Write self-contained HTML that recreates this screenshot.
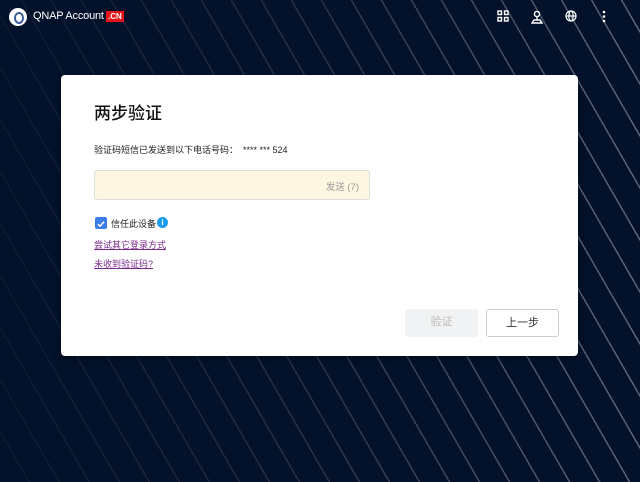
<!DOCTYPE html>
<html><head><meta charset="utf-8"><style>
*{box-sizing:border-box;margin:0;padding:0}
body{width:640px;height:482px;overflow:hidden;background:#03112b;font-family:"Liberation Sans","Noto Sans CJK SC",sans-serif;position:relative}
.bg{position:absolute;inset:0;background:repeating-linear-gradient(60deg,transparent 0 24.5px,rgba(200,205,215,.45) 24.5px 26px);-webkit-mask-image:linear-gradient(90deg,rgba(0,0,0,.1),rgba(0,0,0,.4) 50%,#000);}
.top{position:absolute;top:0;left:0;right:0;height:36px;color:#fff}
.logo{position:absolute;left:9px;top:8px;width:18px;height:18px;border-radius:50%;background:#fff}
.logo:after{content:"";position:absolute;left:5px;top:4px;width:6px;height:8px;border:2px solid #3a5a9a;border-radius:50%}
.brand{position:absolute;left:33px;top:10px;font-size:11px;letter-spacing:-.2px}
.cn{position:absolute;left:106px;top:11px;background:#e5141a;color:#fff;font-size:8px;font-weight:bold;padding:1px 2px;line-height:9px}
.ic{position:absolute;top:10px}
.card{position:absolute;left:61px;top:75px;width:517px;height:281px;background:#fff;border-radius:4px;box-shadow:0 2px 6px rgba(0,0,0,.4)}
h1{position:absolute;left:33px;top:24px;font-size:17px;font-weight:500;color:#111}
.msg{position:absolute;left:33px;top:68px;font-size:9px;color:#222}
.inp{position:absolute;left:33px;top:95px;width:276px;height:30px;background:#fdf6e0;border:1px solid #ddd;border-radius:3px}
.inp span{position:absolute;right:10px;top:8px;font-size:9.5px;color:#999}
.cb{position:absolute;left:34px;top:142px;width:12px;height:12px;background:#3b7de9;border-radius:2px}
.cbl{position:absolute;left:50px;top:142px;font-size:9px;color:#222}
.info{position:absolute;left:96px;top:142px;width:11px;height:11px;border-radius:50%;background:#1a9cf0;color:#fff;font-size:8px;font-weight:bold;text-align:center;line-height:11px}
a{position:absolute;left:33px;font-size:9px;color:#7a2a8a;text-decoration:underline}
.btn{position:absolute;top:234px;width:73px;height:28px;border-radius:3px;font-size:11px;text-align:center;line-height:27px}
</style></head><body>
<div class="bg"></div>
<div class="top">
<div class="logo"></div><div class="brand">QNAP Account</div><div class="cn">.CN</div>
<svg class="ic" style="left:497px" width="12" height="12" viewBox="0 0 12 12" fill="none" stroke="#fff" stroke-width="1.4"><rect x="1" y="1" width="3.5" height="3.5"/><rect x="7.5" y="1" width="3.5" height="3.5"/><rect x="1" y="7.5" width="3.5" height="3.5"/><rect x="7.5" y="7.5" width="3.5" height="3.5"/></svg>
<svg class="ic" style="left:531px" width="12" height="14" viewBox="0 0 12 14" fill="none" stroke="#fff" stroke-width="1.4"><circle cx="6" cy="4" r="2.6"/><path d="M6 6.6V10M1 13h10L9 10H3z"/></svg>
<svg class="ic" style="left:565px" width="12" height="12" viewBox="0 0 12 12" fill="none" stroke="#fff" stroke-width="1.2"><circle cx="6" cy="6" r="5"/><ellipse cx="6" cy="6" rx="2.2" ry="5"/><path d="M1 6h10"/></svg>
<svg class="ic" style="left:602px" width="4" height="13" viewBox="0 0 4 13" fill="#fff"><circle cx="2" cy="2" r="1.3"/><circle cx="2" cy="6.5" r="1.3"/><circle cx="2" cy="11" r="1.3"/></svg>
</div>
<div class="card">
<h1>两步验证</h1>
<div class="msg">验证码短信已发送到以下电话号码：&nbsp; **** *** 524</div>
<div class="inp"><span>发送 (7)</span></div>
<div class="cb"><svg width="12" height="12" viewBox="0 0 12 12"><path d="M3 6.2l2 2 4-4.4" fill="none" stroke="#fff" stroke-width="1.5"/></svg></div>
<div class="cbl">信任此设备</div>
<div class="info">i</div>
<a style="top:163px">尝试其它登录方式</a>
<a style="top:182px">未收到验证码?</a>
<div class="btn" style="left:344px;background:#f1f2f4;color:#bbb">验证</div>
<div class="btn" style="left:425px;border:1px solid #ccc;color:#333">上一步</div>
</div>
</body></html>
